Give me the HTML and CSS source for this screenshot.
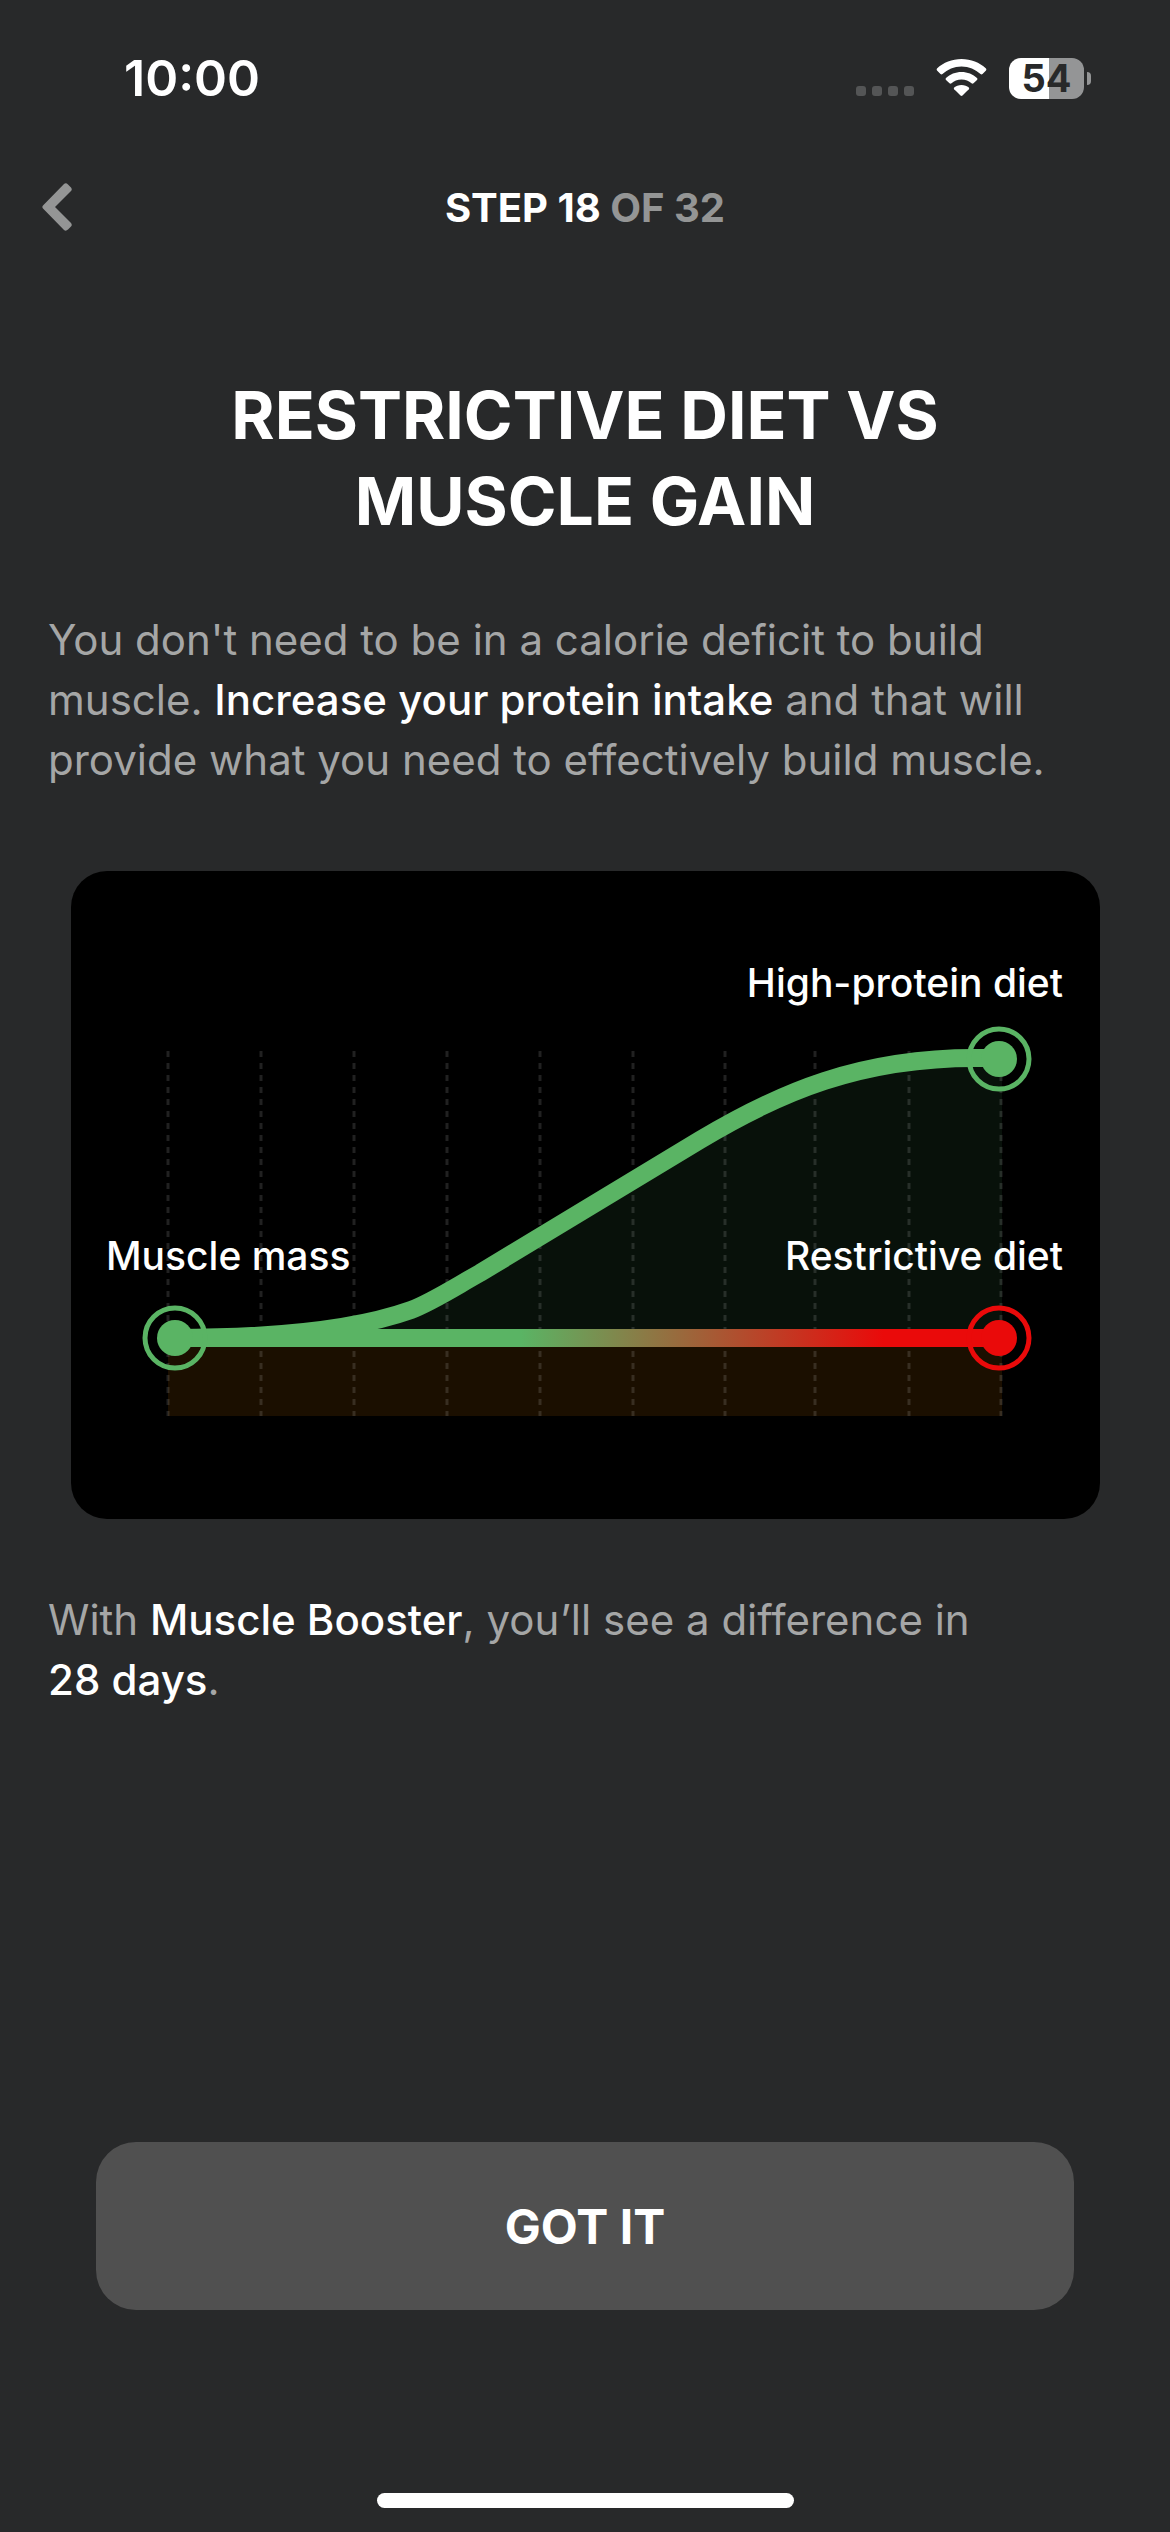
FILE: index.html
```
<!DOCTYPE html>
<html lang="en">
<head>
    <meta charset="UTF-8">
    <meta name="viewport" content="width=device-width, initial-scale=1.0">
    <title>Restrictive diet vs muscle gain</title>
    <link rel="stylesheet" href="styles.css">
</head>
<body>
    <div class="status-bar">
        <span class="time">10:00</span>
        <div class="status-icons">
            <svg class="signal" width="58" height="40" viewBox="0 0 58 40">
                <rect x="0" y="28" width="10" height="10" rx="3"/>
                <rect x="16" y="28" width="10" height="10" rx="3"/>
                <rect x="32" y="28" width="10" height="10" rx="3"/>
                <rect x="48" y="28" width="10" height="10" rx="3"/>
            </svg>
            <svg class="wifi" width="51" height="40" viewBox="0 0 51 40">
                <path d="M25.500 1C35 1 43.500 4.500 50 10.500Q50.800 11.500 50 12.500L46.500 16Q45.500 16.800 44.500 16C39.500 11.500 33 8.500 25.500 8.500S11.500 11.500 6.500 16Q5.500 16.800 4.500 16L1 12.500Q.200 11.500 1 10.500C7.500 4.500 16 1 25.500 1Z"/>
                <path d="M25.500 14C31.500 14 37 16.200 41 20Q42 21 41 22L37.500 25.300Q36.500 26 35.500 25.300C33 22.900 29.500 21.500 25.500 21.500S18 22.900 15.500 25.300Q14.500 26 13.500 25.300L10 22Q9 21 10 20C14 16.200 19.500 14 25.500 14Z"/>
                <path d="M25.500 27C28.500 27 31 28 32.800 29.500Q33.700 30.300 32.800 31.300L26.500 37.600Q25.500 38.500 24.500 37.600L18.200 31.300Q17.300 30.300 18.200 29.500C20 28 22.500 27 25.500 27Z"/>
            </svg>
            <div class="battery"><span class="battery-level">54</span></div>
        </div>
    </div>

    <header class="header">
        <button class="back" type="button" aria-label="Back">
            <svg width="30" height="48" viewBox="0 0 30 48">
                <path d="M22 1Q24 -.500 26 1.500L29 4.500Q30.500 6.500 29 8L13 24L29 40Q30.500 42 29 43.500L26 46.500Q24 48.500 22 47L1 25.500Q-.300 24 1 22.500Z"/>
            </svg>
        </button>
        <div class="step">STEP 18 <span>OF 32</span></div>
    </header>

    <main class="content">
        <h1>RESTRICTIVE DIET VS<br>MUSCLE GAIN</h1>
        <p class="text">You don't need to be in a calorie deficit to build muscle. <strong>Increase your protein intake</strong> and that will provide what you need to effectively build muscle.</p>

        <div class="chart">
            <svg viewBox="0 0 1029 648">
                <defs>
                    <linearGradient id="fade" gradientUnits="userSpaceOnUse" x1="104" y1="0" x2="928" y2="0">
                        <stop offset="0.42" stop-color="#5ab464"/>
                        <stop offset="0.86" stop-color="#ea0a0a"/>
                    </linearGradient>
                </defs>
                <path class="area-high" d="M284 467L340 439C361 431 384 416 409 402L629 269C709 221 789 187 904 187H931V467Z"/>
                <rect class="area-low" x="97" y="467" width="834" height="78"/>
                <g class="grid">
                    <path d="M97 180V545M190 180V545M283 180V545M376 180V545M469 180V545M562 180V545M654 180V545M744 180V545M838 180V545M930 180V545"/>
                </g>
                <path class="line line-high" d="M104 467C199 467 284 459 340 439C361 431 384 416 409 402L629 269C709 221 789 187 904 187H928"/>
                <rect x="104" y="458" width="824" height="18" fill="url(#fade)"/>
                <circle class="ring green" cx="104" cy="467" r="30"/>
                <circle class="dot green" cx="104" cy="467" r="18"/>
                <circle class="ring green" cx="928" cy="188" r="30"/>
                <circle class="dot green" cx="928" cy="188" r="18"/>
                <circle class="ring red" cx="928" cy="467" r="30"/>
                <circle class="dot red" cx="928" cy="467" r="18"/>
                <text x="35" y="399">Muscle mass</text>
                <text x="992" y="126" text-anchor="end">High-protein diet</text>
                <text x="992" y="399" text-anchor="end">Restrictive diet</text>
            </svg>
        </div>

        <p class="text">With <strong>Muscle Booster</strong>, you’ll see a difference in <strong>28&nbsp;days</strong>.</p>
    </main>

    <footer class="footer">
        <button class="got-it" type="button">GOT IT</button>
        <div class="home-bar"></div>
    </footer>
</body>
</html>
```
FILE: styles.css
```
* {
    box-sizing: border-box;
}
body {
    margin: 0;
    min-height: 100vh;
    display: flex;
    flex-direction: column;
    background-color: #28292a;
    color: #fff;
    font-family: Inter, "Liberation Sans", sans-serif;
}
button {
    border: none;
    padding: 0;
    font-family: inherit;
    color: inherit;
    cursor: pointer;
}
svg {
    display: block;
}
.status-bar {
    display: flex;
    justify-content: space-between;
    align-items: center;
    height: 156px;
    padding: 0 79px 0 124px;
}
.time {
    font-size: 50px;
    font-weight: 600;
}
.status-icons {
    display: flex;
    align-items: center;
    gap: 22px;
}
.signal {
    fill: #545556;
}
.wifi {
    fill: #fff;
}
.battery {
    position: relative;
    width: 75px;
    height: 41px;
    border-radius: 12px;
    background: linear-gradient(to right, #fff 54%, #949596 54%);
    margin-right: 7px;
    text-align: center;
}
.battery::after {
    content: "";
    position: absolute;
    right: -7px;
    top: 14px;
    width: 4px;
    height: 13px;
    border-radius: 0 4px 4px 0;
    background-color: #949596;
}
.battery-level {
    font-size: 38px;
    line-height: 41px;
    font-weight: 700;
    color: #28292a;
}
.header {
    display: grid;
    grid-template-columns: 72px 1fr 72px;
    align-items: center;
    height: 102px;
    padding: 0 42px;
}
.back {
    background: none;
    justify-self: start;
}
.back svg {
    fill: #949595;
}
.step {
    text-align: center;
    font-size: 40px;
    font-weight: 700;
}
.step span {
    color: #949595;
}
.content {
    flex: 1;
    padding: 114px 48px 0;
}
h1 {
    margin: 0 0 66px;
    text-align: center;
    font-size: 66px;
    line-height: 86px;
    font-weight: 700;
}
.text {
    margin: 0;
    font-size: 42px;
    line-height: 60px;
    color: #a5a6a6;
}
.text strong {
    font-weight: 500;
    color: #fff;
}
.chart {
    margin: 81px 22px 71px 23px;
    border-radius: 36px;
    overflow: hidden;
    background-color: #000;
}
.chart text {
    fill: #fff;
    font-size: 39px;
    font-weight: 500;
}
.area-high {
    fill: #08110a;
}
.area-low {
    fill: #1b0f00;
}
.grid path {
    fill: none;
    stroke: #fff;
    stroke-opacity: 0.13;
    stroke-width: 3;
    stroke-dasharray: 6 6;
}
.line {
    fill: none;
    stroke-width: 18;
}
.line-high {
    stroke: #5ab464;
}
.ring {
    fill: none;
    stroke-width: 5;
}
.ring.green {
    stroke: #5ab464;
}
.ring.red {
    stroke: #ea0a0a;
}
.dot.green {
    fill: #5ab464;
}
.dot.red {
    fill: #ea0a0a;
}
.footer {
    padding: 0 96px 24px;
}
.got-it {
    width: 100%;
    height: 168px;
    border-radius: 40px;
    background-color: #505050;
    font-size: 48px;
    font-weight: 700;
}
.home-bar {
    width: 417px;
    height: 15px;
    margin: 183px auto 0;
    border-radius: 8px;
    background-color: #fff;
}
```
